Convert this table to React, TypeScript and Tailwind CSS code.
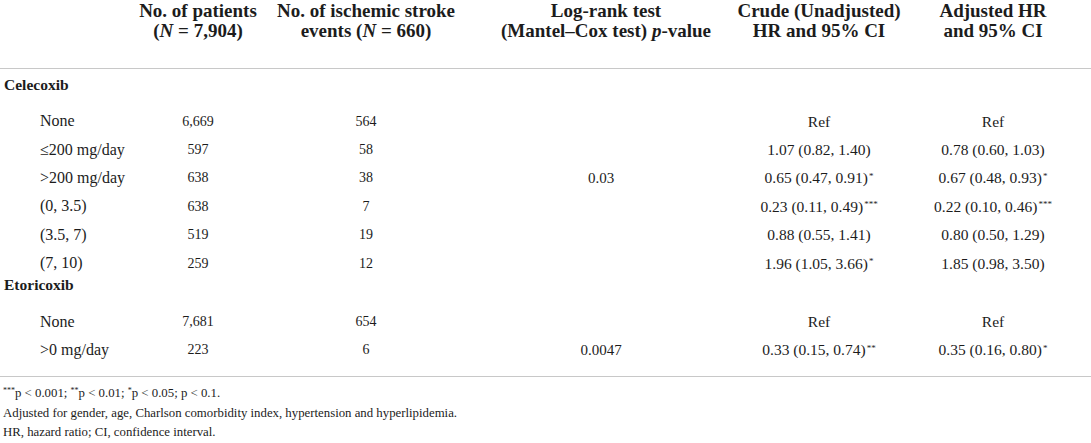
import type { ReactNode } from 'react'

type Row = { label: ReactNode; patients: string; events: string; p?: string; crude: ReactNode; adjusted: ReactNode }

const Star = ({ n }: { n: number }) => (
  <sup className="text-[9px] ml-[1px]">{'*'.repeat(n)}</sup>
)

const CELECOXIB: Row[] = [
  { label: 'None', patients: '6,669', events: '564', crude: 'Ref', adjusted: 'Ref' },
  { label: '≤200 mg/day', patients: '597', events: '58', crude: '1.07 (0.82, 1.40)', adjusted: '0.78 (0.60, 1.03)' },
  {
    label: '>200 mg/day',
    patients: '638',
    events: '38',
    p: '0.03',
    crude: <>0.65 (0.47, 0.91)<Star n={1} /></>,
    adjusted: <>0.67 (0.48, 0.93)<Star n={1} /></>,
  },
  {
    label: '(0, 3.5)',
    patients: '638',
    events: '7',
    crude: <>0.23 (0.11, 0.49)<Star n={3} /></>,
    adjusted: <>0.22 (0.10, 0.46)<Star n={3} /></>,
  },
  { label: '(3.5, 7)', patients: '519', events: '19', crude: '0.88 (0.55, 1.41)', adjusted: '0.80 (0.50, 1.29)' },
  { label: '(7, 10)', patients: '259', events: '12', crude: <>1.96 (1.05, 3.66)<Star n={1} /></>, adjusted: '1.85 (0.98, 3.50)' },
]

const ETORICOXIB: Row[] = [
  { label: 'None', patients: '7,681', events: '654', crude: 'Ref', adjusted: 'Ref' },
  {
    label: '>0 mg/day',
    patients: '223',
    events: '6',
    p: '0.0047',
    crude: <>0.33 (0.15, 0.74)<Star n={2} /></>,
    adjusted: <>0.35 (0.16, 0.80)<Star n={1} /></>,
  },
]

const GRID = 'grid grid-cols-[133px_130px_206px_274px_152px_196px]'

function Cell({ children, className = '' }: { children?: ReactNode; className?: string }) {
  return (
    <div className={`flex justify-center whitespace-nowrap ${className}`}>
      <span>{children}</span>
    </div>
  )
}

function HeadCell({ top, bottom }: { top: ReactNode; bottom: ReactNode }) {
  return (
    <div className="flex flex-col items-center whitespace-nowrap">
      <span>{top}</span>
      <span>{bottom}</span>
    </div>
  )
}

function DataRow({ r }: { r: Row }) {
  return (
    <div className={`${GRID} h-[28.4px] items-center`}>
      <div className="pl-[40px] text-[16px] whitespace-nowrap">{r.label}</div>
      <Cell className="text-[14px]">{r.patients}</Cell>
      <Cell className="text-[14px]">{r.events}</Cell>
      <Cell className="text-[15px] pr-[10px]">{r.p}</Cell>
      <Cell className="text-[15.5px]">{r.crude}</Cell>
      <Cell className="text-[15.5px]">{r.adjusted}</Cell>
    </div>
  )
}

export default function App() {
  return (
    <div className="w-[1091px] h-[443px] bg-white text-[#1c1c1c] font-['Liberation_Serif',serif] overflow-hidden">
      <div className={`${GRID} items-start text-[19px] leading-[20px] font-bold pt-[1px] h-[68px]`}>
        <div />
        <HeadCell top="No. of patients" bottom={<>(<i>N</i> = 7,904)</>} />
        <HeadCell top="No. of ischemic stroke" bottom={<>events (<i>N</i> = 660)</>} />
        <HeadCell top="Log-rank test" bottom={<>(Mantel–Cox test) <i>p</i>-value</>} />
        <HeadCell top="Crude (Unadjusted)" bottom="HR and 95% CI" />
        <HeadCell top="Adjusted HR" bottom="and 95% CI" />
      </div>
      <div className="h-px bg-[#c8c8c8]" />

      <div className="pl-[4px] pt-[8px] h-[38px] text-[15.5px] leading-[16px] font-bold">Celecoxib</div>
      {CELECOXIB.map((r, i) => (
        <DataRow key={i} r={r} />
      ))}
      <div className="pl-[4px] h-[30px] text-[15.5px] leading-[16px] font-bold">Etoricoxib</div>
      {ETORICOXIB.map((r, i) => (
        <DataRow key={i} r={r} />
      ))}
      <div className="h-[12px]" />
      <div className="h-px bg-[#c8c8c8]" />

      <div className="pt-[7px] pl-[3px] text-[12.8px] leading-[19.5px]">
        <p>
          <sup className="text-[8px]">***</sup>p &lt; 0.001; <sup className="text-[8px]">**</sup>p &lt; 0.01;{' '}
          <sup className="text-[8px]">*</sup>p &lt; 0.05; p &lt; 0.1.
        </p>
        <p>Adjusted for gender, age, Charlson comorbidity index, hypertension and hyperlipidemia.</p>
        <p>HR, hazard ratio; CI, confidence interval.</p>
      </div>
    </div>
  )
}
